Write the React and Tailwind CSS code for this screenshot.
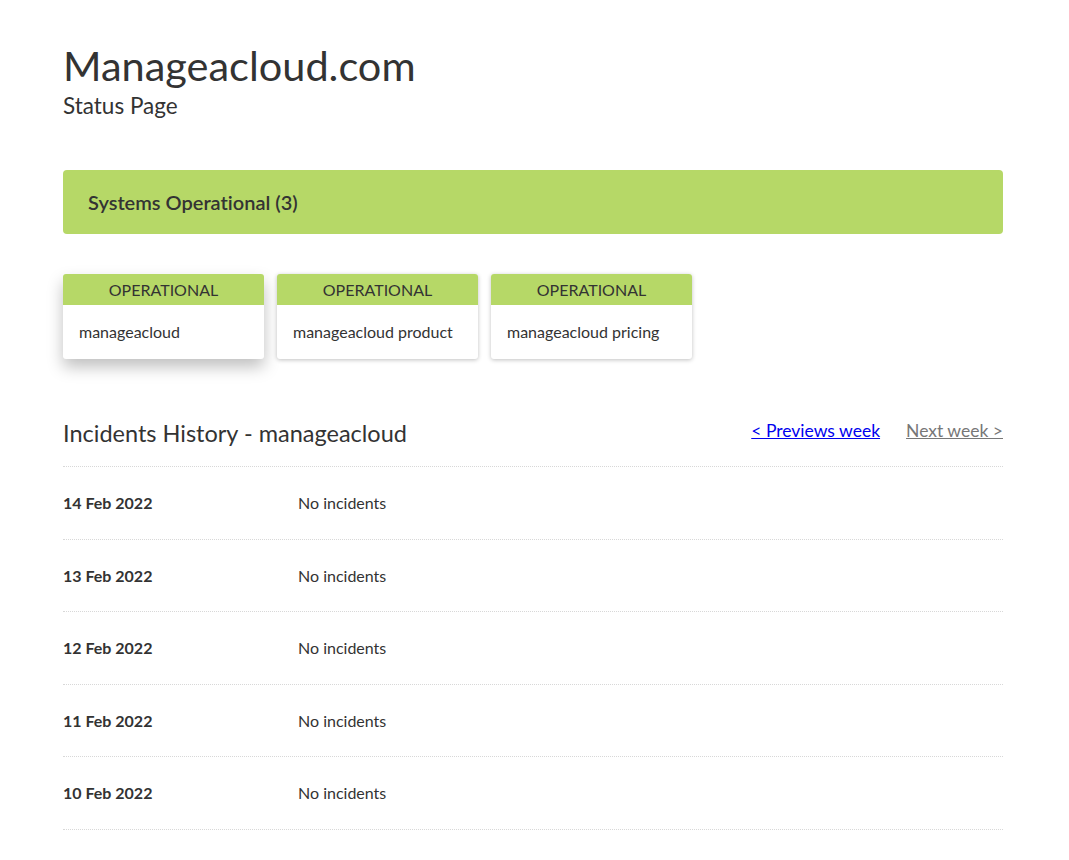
export default function App() {
  const services = ['manageacloud', 'manageacloud product', 'manageacloud pricing'];
  const days = ['14 Feb 2022', '13 Feb 2022', '12 Feb 2022', '11 Feb 2022', '10 Feb 2022', '9 Feb 2022', '8 Feb 2022'];

  return (
    <div className="min-h-screen bg-white text-[#333] font-['Lato','Liberation_Sans',sans-serif] [font-variant-ligatures:none]">
      <div className="w-[940px] ml-[63px] pt-[38px]">
        <header>
          <h1 className="text-[41.5px] leading-[54px] font-normal">Manageacloud.com</h1>
          <p className="text-[22.5px] leading-[28px]">Status Page</p>
        </header>

        <div className="mt-[50px] h-16 rounded bg-[#b6d867] flex items-center px-[25px]">
          <span className="text-[20px] font-semibold">Systems Operational (3)</span>
        </div>

        <div className="mt-10 flex gap-[13px]">
          {services.map((name, i) => (
            <div
              key={name}
              className={`w-[201px] rounded-[3px] overflow-hidden bg-white ${
                i === 0 ? 'shadow-[0_8px_16px_rgba(0,0,0,0.25)]' : 'shadow-[0_1px_4px_rgba(0,0,0,0.25)]'
              }`}
            >
              <div className="h-[31px] bg-[#b6d867] flex items-center justify-center text-[16px] uppercase">
                Operational
              </div>
              <div className="h-[54px] flex items-center px-4 text-[16px]">{name}</div>
            </div>
          ))}
        </div>

        <div className="mt-[59px] flex items-end justify-between pb-[18px] border-b border-dotted border-[#d8d8d8]">
          <h2 className="text-[23.5px] leading-[30px]">Incidents History - manageacloud</h2>
          <div className="flex gap-[26px] text-[17.5px] mb-[4px]">
            <a href="#" className="text-[#0000ee] underline">&lt; Previews week</a>
            <a href="#" className="text-[#777] underline">Next week &gt;</a>
          </div>
        </div>

        <div>
          {days.map((d) => (
            <div key={d} className="h-[72.5px] flex items-center border-b border-dotted border-[#d8d8d8] text-[16px]">
              <span className="w-[235px] font-bold">{d}</span>
              <span>No incidents</span>
            </div>
          ))}
        </div>
      </div>
    </div>
  );
}
